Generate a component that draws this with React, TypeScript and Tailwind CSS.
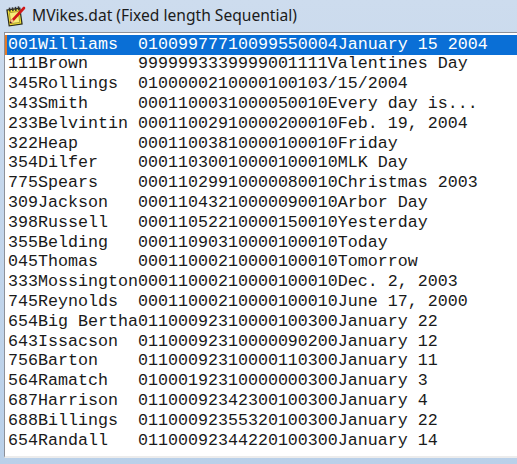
import React from "react";

const rows: string[] = [
  "001Williams  01009977710099550004January 15 2004",
  "111Brown     9999993339999001111Valentines Day",
  "345Rollings  0100000210000100103/15/2004",
  "343Smith     0001100031000050010Every day is...",
  "233Belvintin 00011002910000200010Feb. 19, 2004",
  "322Heap      00011003810000100010Friday",
  "354Dilfer    00011030010000100010MLK Day",
  "775Spears    00011029910000080010Christmas 2003",
  "309Jackson   00011043210000090010Arbor Day",
  "398Russell   00011052210000150010Yesterday",
  "355Belding   00011090310000100010Today",
  "045Thomas    00011000210000100010Tomorrow",
  "333Mossington00011000210000100010Dec. 2, 2003",
  "745Reynolds  00011000210000100010June 17, 2000",
  "654Big Bertha01100092310000100300January 22",
  "643Issacson  01100092310000090200January 12",
  "756Barton    01100092310000110300January 11",
  "564Ramatch   01000192310000000300January 3",
  "687Harrison  01100092342300100300January 4",
  "688Billings  01100092355320100300January 22",
  "654Randall   01100092344220100300January 14",
];

function NotebookIcon() {
  return (
    <svg width="22" height="22" viewBox="0 0 22 22">
      <g transform="rotate(-8 10 12)">
        <rect x="3" y="4" width="13" height="16" fill="#f3e33a" stroke="#2a2a1a" strokeWidth="1.2" />
        <rect x="5" y="7" width="9" height="11" fill="#f8ee7a" stroke="#8a7a20" strokeWidth="0.6" />
        {[5, 8, 11, 14].map((x) => (
          <rect key={x} x={x} y="2" width="1.6" height="4" fill="#333" />
        ))}
      </g>
      <line x1="6" y1="17" x2="19" y2="3" stroke="#d01818" strokeWidth="2.6" strokeLinecap="round" />
      <line x1="6" y1="17" x2="8" y2="15" stroke="#f0c090" strokeWidth="2.6" />
      <line x1="5.2" y1="18" x2="6" y2="17" stroke="#222" strokeWidth="1.5" />
    </svg>
  );
}

export default function App() {
  return (
    <div className="w-[517px] h-[464px] overflow-hidden flex flex-col bg-gradient-to-b from-[#cddcee] to-[#b9d0e9]">
      <div className="h-[32px] shrink-0 flex items-center pl-[5px] gap-[5px]">
        <NotebookIcon />
        <span
          className="text-[15.6px] text-[#1b1b1b] leading-none"
          style={{ fontFamily: '"Noto Sans", "Open Sans", sans-serif' }}
        >
          MVikes.dat (Fixed length Sequential)
        </span>
      </div>
      <div className="flex-1 min-h-0 pl-[4px] flex flex-col">
        <div className="flex-1 min-h-0 border-t border-l border-[#8c9099] border-b-2 border-b-[#ececec] bg-white pt-[2px] overflow-hidden">
          {rows.map((r, i) => (
            <div
              key={i}
              className={
                "h-[19.8px] flex items-center whitespace-pre text-[16.67px] leading-none " +
                (i === 0
                  ? "bg-[#0a6fd6] text-white border-l-2 border-[#e07a2a]"
                  : "text-[#1a1a1a] border-l-2 border-transparent")
              }
              style={{
                fontFamily:
                  '"Courier New", "Nimbus Mono PS", "Nimbus Mono L", FreeMono, Courier, "Liberation Mono", monospace',
              }}
            >
              <span className="pl-[1px]">{r}</span>
            </div>
          ))}
        </div>
        <div className="h-[6px] shrink-0" />
      </div>
    </div>
  );
}
